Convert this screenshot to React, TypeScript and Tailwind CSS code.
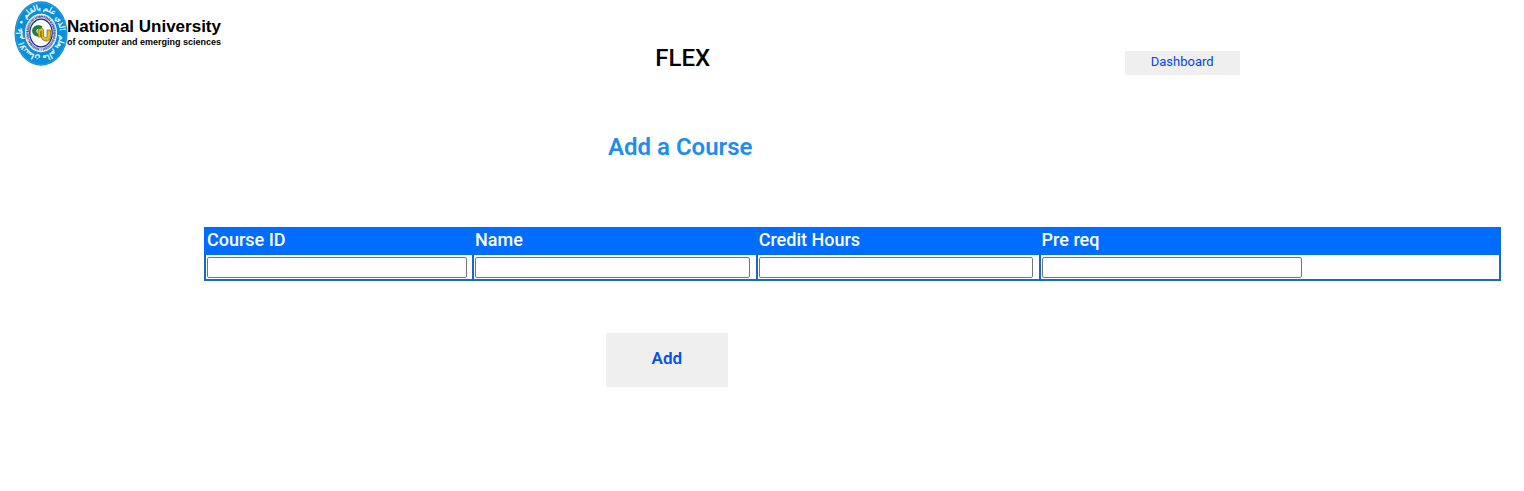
import React from 'react';

const columns = [
  { id: 'course-id', label: 'Course ID', col: 'w-[20.7%]', input: 'w-[98%]' },
  { id: 'name', label: 'Name', col: 'w-[21.9%]', input: 'w-[98%]' },
  { id: 'credit-hours', label: 'Credit Hours', col: 'w-[21.85%]', input: 'w-[98%]' },
  { id: 'pre-req', label: 'Pre req', col: '', input: 'w-[260px]' },
];

function Crest() {
  return (
    <svg viewBox="0 0 54 66" className="h-[66px] w-[54px] shrink-0" aria-hidden="true">
      <defs>
        <path id="outer-ring" d="M46 33 A19 23 0 0 1 8 33 A19 23 0 0 1 46 33" />
        <path id="inner-ring" d="M27 48.5 A12.5 15.5 0 0 1 27 17.5 A12.5 15.5 0 0 1 27 48.5" />
      </defs>
      <ellipse cx="27" cy="33.5" rx="26.5" ry="32.3" fill="#0b8fd8" />
      <ellipse cx="27" cy="33.5" rx="25.2" ry="31" fill="none" stroke="#35a9e5" strokeWidth="0.6" />
      <ellipse cx="27" cy="33" rx="16" ry="19.3" fill="#ffffff" />
      <text fill="#ffffff" stroke="#ffffff" strokeWidth="0.3" fontFamily="DejaVu Sans, sans-serif" fontSize="7.5" direction="rtl" textAnchor="middle">
        <textPath href="#outer-ring" startOffset="50%">الذي علم بالقلم • علم الانسان مالم يعلم</textPath>
      </text>
      <ellipse cx="27" cy="33" rx="13.5" ry="16.6" fill="none" stroke="#8fa3d3" strokeWidth="3.4" strokeDasharray="1 0.6" />
      <text fill="#111b72" fontFamily="Liberation Sans, sans-serif" fontSize="2.7" fontWeight="700" textAnchor="middle">
        <textPath href="#inner-ring" startOffset="50%">NATIONAL UNIVERSITY OF COMPUTER &amp; EMERGING SCIENCES</textPath>
      </text>
      <ellipse cx="27" cy="33" rx="11.2" ry="13.8" fill="#ffffff" stroke="#152083" strokeWidth="1.2" />
      <path d="M28 26.5 C23 24 18 27 18.5 31.5 C19 36 24 37.5 27 34.5 C24 35 22 33 22 31 C22 28 25 28 27 29 Z" fill="#16863b" stroke="#0c5731" strokeWidth="0.6" />
      <path d="M24 37 V30 Q28 26 29.5 30 V36 Q31 39 33 37 V30 H36.5 V38 Q34 43 29 40 Q26.5 38 27 31 V37 Z" fill="#e2bd16" stroke="#755e12" strokeWidth="0.7" />
    </svg>
  );
}

export default function App() {
  return (
    <div className="bg-white pb-8 font-['Roboto','Liberation_Sans',sans-serif] text-black">
      <header className="flex items-start">
        <div className="flex w-[43%] items-start pl-[14px]">
          <Crest />
          <div className="-ml-px whitespace-nowrap pt-[18px] font-['Liberation_Sans',sans-serif] font-bold">
            <p className="text-[17px] leading-[18px]">National University</p>
            <p className="text-[9px] leading-3">of computer and emerging sciences</p>
          </div>
        </div>
        <h1 className="w-[30.8%] pt-11 text-2xl leading-7 font-medium">FLEX</h1>
        <button
          type="button"
          className="mt-[51px] h-6 w-[115px] bg-[#efefef] pb-0.5 text-[13px] leading-5 text-[#0645e5]"
        >
          Dashboard
        </button>
      </header>

      <main>
        <h2 className="mt-14 ml-[39.9%] text-2xl leading-8 font-semibold text-[#1e8df0]">Add a Course</h2>
        <form onSubmit={(event) => event.preventDefault()}>
          <div className="mt-16 mr-[23px] ml-[204px]">
            <table className="w-full table-fixed border-separate border-spacing-0 border-r-2 border-b-2 border-[#1668cc]">
              <thead className="bg-[#006dff] text-left text-white">
                <tr>
                  {columns.map((c) => (
                    <th key={c.id} scope="col" className={`${c.col} h-7 p-0 pb-0.5 pl-[3px] align-middle text-lg leading-6 font-medium`}>
                      <label htmlFor={c.id}>{c.label}</label>
                    </th>
                  ))}
                </tr>
              </thead>
              <tbody>
                <tr>
                  {columns.map((c) => (
                    <td key={c.id} className="h-6 border-l-2 border-[#1668cc] p-0 pt-0.5 pb-px pl-px align-middle">
                      <input
                        id={c.id}
                        type="text"
                        className={`${c.input} block h-[21px] rounded-xs border border-[#767676] bg-white px-1 text-sm`}
                      />
                    </td>
                  ))}
                </tr>
              </tbody>
            </table>
          </div>
          <button
            type="submit"
            className="mt-[52px] ml-[39.75%] h-[54px] w-[122px] bg-[#efefef] pb-0.5 text-[17px] font-semibold text-[#0052e5]"
          >
            Add
          </button>
        </form>
      </main>
    </div>
  );
}
